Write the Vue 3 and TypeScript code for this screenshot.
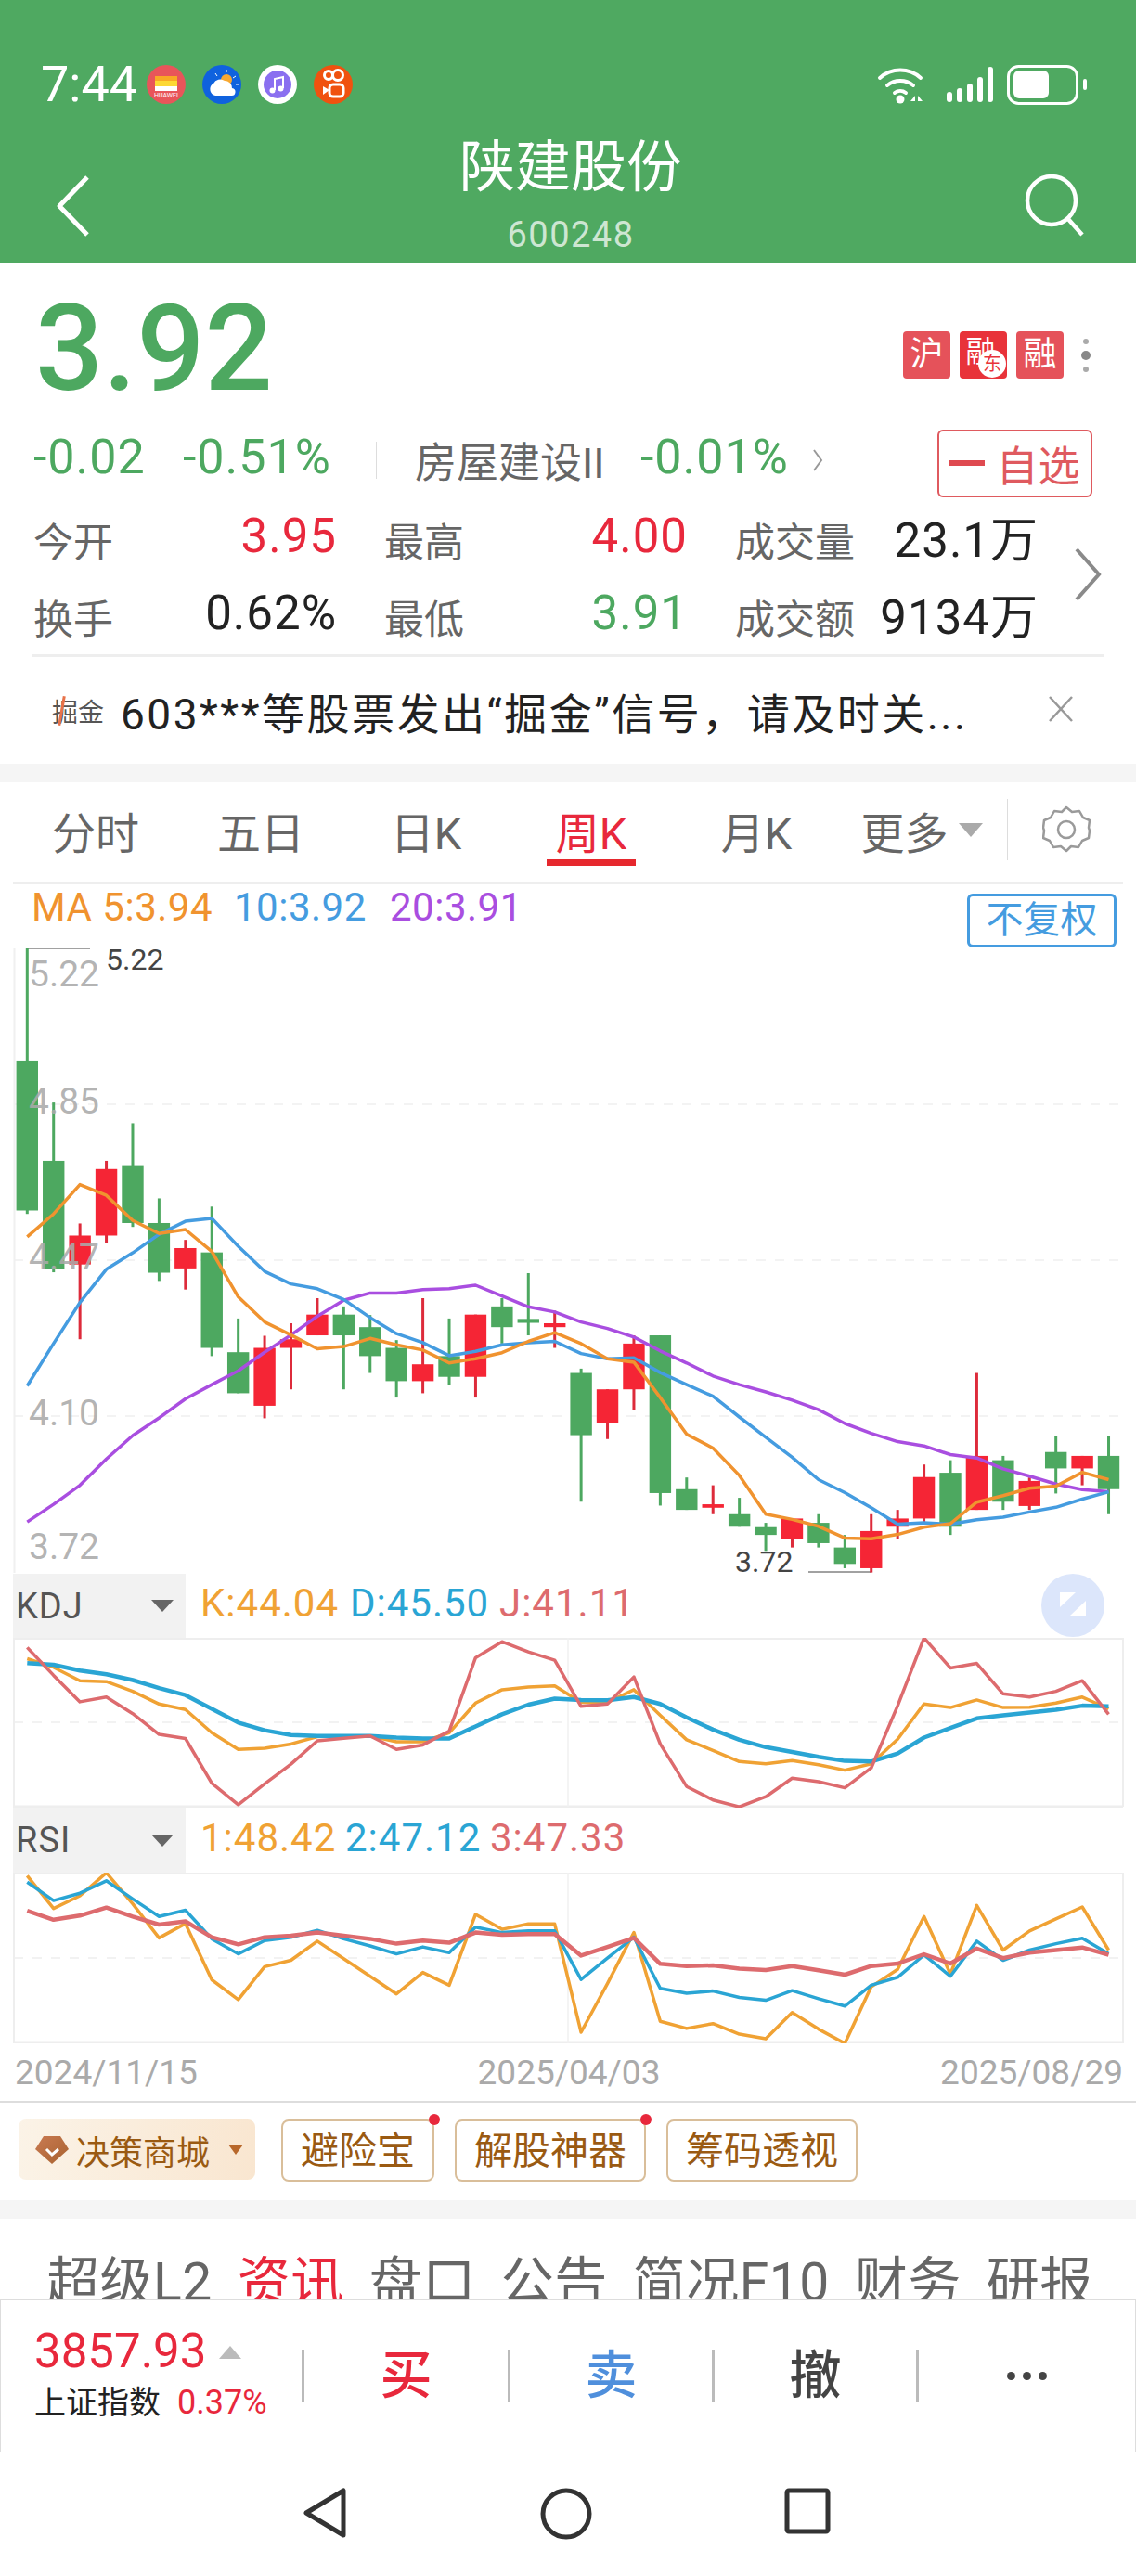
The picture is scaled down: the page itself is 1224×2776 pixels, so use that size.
<template>
  <div class="page">
    <header class="top">
      <div class="status">
        <span class="clock">7:44</span>
        <svg class="notify" width="246" height="42" viewBox="0 0 246 42">
          <!-- huawei -->
          <circle cx="21" cy="21" r="21" fill="#e8555a" />
          <rect x="9" y="12" width="24" height="5" fill="#f9a825" />
          <rect x="9" y="17" width="24" height="6" fill="#fdd835" />
          <rect x="9" y="23" width="24" height="5" fill="#fff" />
          <text x="21" y="35" class="hw">HUAWEI</text>
          <!-- weather -->
          <circle cx="81" cy="21" r="21" fill="#0f62de" />
          <circle cx="86" cy="16" r="6" fill="#f7a832" />
          <path d="M74 9l2 3M86 5v3M96 12l-3 2M99 21h-3" stroke="#fff" stroke-width="1" />
          <path d="M74 33a7 7 0 0 1-2-13 8 8 0 0 1 12-3 8 8 0 0 1 8 8 4 4 0 0 1-1 8z" fill="#fff" />
          <!-- music -->
          <circle cx="141" cy="21" r="21" fill="#fff" />
          <circle cx="141" cy="21" r="15" fill="#8a6ff0" />
          <path d="M138 27V15l9-2v12" fill="none" stroke="#fff" stroke-width="2" />
          <circle cx="135.500" cy="27.500" r="3" fill="#fff" />
          <circle cx="144.500" cy="25.500" r="3" fill="#fff" />
          <!-- kuaishou -->
          <circle cx="201" cy="21" r="21" fill="#f0520f" />
          <circle cx="196" cy="11" r="4.500" fill="none" stroke="#fff" stroke-width="3" />
          <circle cx="206" cy="11" r="5.500" fill="none" stroke="#fff" stroke-width="3" />
          <rect x="197" y="21" width="15" height="13" rx="4" fill="none" stroke="#fff" stroke-width="3" />
          <path d="M197 27l-7-4v9z" fill="#fff" />
        </svg>
        <svg class="sys" width="232" height="46" viewBox="0 0 232 46">
          <!-- wifi -->
          <path d="M3 16a33 33 0 0 1 44 0" fill="none" stroke="#fff" stroke-width="4" stroke-linecap="round" />
          <path d="M11 24a22 22 0 0 1 28 0" fill="none" stroke="#fff" stroke-width="4" stroke-linecap="round" />
          <path d="M19 32a10 10 0 0 1 12 0" fill="none" stroke="#fff" stroke-width="4" stroke-linecap="round" />
          <circle cx="25" cy="39" r="4.500" fill="#fff" />
          <path d="M36 41l5-6v6zM44 35l5 6h-5z" fill="#fff" />
          <!-- signal -->
          <g fill="#fff">
            <rect x="75" y="31" width="6" height="11" rx="3" />
            <rect x="86" y="27" width="6" height="15" rx="3" />
            <rect x="97" y="22" width="6" height="20" rx="3" />
            <rect x="108" y="15" width="6" height="27" rx="3" />
            <rect x="119" y="4" width="6" height="38" rx="3" />
          </g>
          <!-- battery -->
          <rect x="141.500" y="3.500" width="74" height="40" rx="11" fill="none" stroke="#fff" stroke-width="3" />
          <rect x="147" y="8" width="38" height="30" rx="6" fill="#fff" />
          <rect x="222" y="17" width="4" height="12" rx="2" fill="#fff" />
        </svg>
      </div>
      <div class="nav">
        <svg class="back" width="38" height="68" viewBox="0 0 38 68">
          <path d="M34 3L4 34l30 31" fill="none" stroke="#fff" stroke-width="5" stroke-linejoin="round" />
        </svg>
        <div class="title">
          <div class="name">陕建股份</div>
          <div class="code">600248</div>
        </div>
        <svg class="search" width="66" height="68" viewBox="0 0 66 68">
          <circle cx="29" cy="29" r="26" fill="none" stroke="#fff" stroke-width="4.500" />
          <path d="M46 48l16 18" fill="none" stroke="#fff" stroke-width="4.500" />
        </svg>
      </div>
    </header>

    <section class="quote">
      <div class="price-row">
        <span class="price">3.92</span>
        <div class="badges">
          <span class="badge">沪</span>
          <span class="badge badge-dong">
            <span class="rong">融</span>
            <i class="dong">东</i>
          </span>
          <span class="badge">融</span>
          <span class="more-dots"><i></i><i class="mid"></i><i></i></span>
        </div>
      </div>
      <div class="change-row">
        <span class="down chg chg-abs">-0.02</span>
        <span class="down chg chg-pct">-0.51%</span>
        <span class="vline"></span>
        <span class="industry">房屋建设II</span>
        <span class="down chg ind-pct">-0.01%</span>
        <svg width="12" height="26" viewBox="0 0 12 26">
          <path d="M2 2l8 11-8 11" fill="none" stroke="#999" stroke-width="2" />
        </svg>
        <button class="watch"><i></i>自选</button>
      </div>
      <div class="stats-wrap">
        <div class="stats">
          <div v-for="s in stats" :key="s.label" class="stat">
            <span class="stat-label">{{ s.label }}</span>
            <span class="stat-value" :class="s.cls">{{ s.value }}</span>
          </div>
        </div>
        <svg class="stats-arrow" width="32" height="58" viewBox="0 0 32 58">
          <path d="M4 2l24 27L4 56" fill="none" stroke="#8a8a8a" stroke-width="4" />
        </svg>
      </div>
      <div class="notice">
        <span class="notice-tag">掘金</span>
        <span class="notice-text">603***等股票发出“掘金”信号，请及时关...</span>
        <svg class="notice-close" width="30" height="30" viewBox="0 0 30 30">
          <path d="M3 2l24 26M27 2L3 28" fill="none" stroke="#999" stroke-width="2.500" />
        </svg>
      </div>
    </section>

    <div class="gap"></div>

    <section class="kline">
      <div class="periods">
        <span v-for="p in periods" :key="p" class="period" :class="{ on: p === '周K' }">{{ p }}</span>
        <span class="period">更多<i class="caret"></i></span>
        <span class="period-sep"></span>
        <svg class="gear" width="52" height="54" viewBox="0 0 52 54">
          <path d="M26 3l6 5 8-1 4 7 7 3-1 8 1 3-1 8-7 3-4 7-8-1-5 5-6-5-8 1-4-7-7-3 1-8-1-3 1-8 7-3 4-7 8 1z" fill="none" stroke="#9a9a9a" stroke-width="2.500" stroke-linejoin="round" />
          <circle cx="26" cy="27" r="9" fill="none" stroke="#9a9a9a" stroke-width="2.500" />
        </svg>
      </div>
      <div class="ma-row">
        <span class="ma5">MA 5:3.94</span>
        <span class="ma10">10:3.92</span>
        <span class="ma20">20:3.91</span>
        <button class="adjust">不复权</button>
      </div>
      <div class="chart">
        <svg class="plot" width="1224" height="674" viewBox="0 1022 1224 674">
          <path d="M15.500 1022V1695" stroke="#f0f0f0" stroke-width="2" />
          <path v-for="y in [1190, 1358, 1526]" :key="y" :d="`M15 ${y}H1210`" stroke="#f0f0f0" stroke-width="1.500" stroke-dasharray="10 10" />
          <path d="M29 1022H97M871 1694H939" stroke="#444" stroke-width="1" />
          <g v-for="c in candleShapes" :key="c.x">
            <rect :x="c.x - 1.500" :y="c.wickTop" width="3" :height="c.wickH" :fill="c.wick" />
            <rect :x="c.x - 11.700" :y="c.bodyTop" width="23.400" :height="c.bodyH" :fill="c.fill" />
          </g>
          <path :d="ma20Path" class="line ma-purple" />
          <path :d="ma10Path" class="line ma-blue" />
          <path :d="ma5Path" class="line ma-orange" />
        </svg>
        <span v-for="l in axisLabels" :key="l.text" class="axis-label" :style="{ top: l.top + 'px' }">{{ l.text }}</span>
        <span class="extreme high">5.22</span>
        <span class="extreme low">3.72</span>
      </div>

      <div class="ind-head">
        <span class="ind-tab">KDJ<i class="ind-caret"></i></span>
        <span class="k">K:44.04</span>
        <span class="d">D:45.50</span>
        <span class="j">J:41.11</span>
        <svg class="bubble" width="68" height="68" viewBox="0 0 68 68">
          <circle cx="34" cy="34" r="34" fill="#dce6fb" />
          <path d="M20 20h17L20 36zM48 29v16H31z" fill="#fff" />
        </svg>
      </div>
      <svg class="plot" width="1224" height="183" viewBox="0 1765 1224 183">
        <path d="M15 1765V1947M1210 1765V1947M14 1766H1210" stroke="#eee" stroke-width="2" fill="none" />
        <path d="M14 1947H1210" stroke="#eee" stroke-width="3" />
        <path d="M15 1856H1210" stroke="#eee" stroke-width="1.500" stroke-dasharray="10 10" />
        <path d="M612 1765V1947" stroke="#f0f0f0" stroke-width="1.500" />
        <path :d="kPath" class="line ind-orange" />
        <path :d="dPath" class="line ind-blue thick" />
        <path :d="jPath" class="line ind-red" />
      </svg>

      <div class="ind-head rsi">
        <span class="ind-tab">RSI<i class="ind-caret"></i></span>
        <span class="k">1:48.42</span>
        <span class="d">2:47.12</span>
        <span class="j">3:47.33</span>
      </div>
      <svg class="plot" width="1224" height="184" viewBox="0 2018 1224 184">
        <path d="M15 2018V2202M1210 2018V2202M14 2019H1210" stroke="#eee" stroke-width="2" fill="none" />
        <path d="M14 2202H1210" stroke="#eee" stroke-width="3" />
        <path d="M15 2110H1210" stroke="#eee" stroke-width="1.500" stroke-dasharray="10 10" />
        <path d="M612 2018V2202" stroke="#f0f0f0" stroke-width="1.500" />
        <path :d="rsi1Path" class="line ind-orange" />
        <path :d="rsi2Path" class="line ind-blue" />
        <path :d="rsi3Path" class="line ind-red thick" />
      </svg>
      <div class="dates">
        <span>2024/11/15</span>
        <span>2025/04/03</span>
        <span>2025/08/29</span>
      </div>
    </section>

    <div class="tools">
      <button class="shop">
        <svg width="36" height="30" viewBox="0 0 36 30">
          <defs>
            <linearGradient id="gem" x1="0" y1="0" x2="1" y2="1">
              <stop offset="0" stop-color="#c97a52" />
              <stop offset="1" stop-color="#a8622f" />
            </linearGradient>
          </defs>
          <path d="M9 0h18l9 14-18 16L0 14z" fill="url(#gem)" />
          <path d="M12 14l6 6 7-6" fill="none" stroke="#fff" stroke-width="3" />
        </svg>
        <span>决策商城</span>
        <i class="shop-caret"></i>
      </button>
      <button class="tool dot">避险宝</button>
      <button class="tool dot">解股神器</button>
      <button class="tool">筹码透视</button>
    </div>

    <div class="gap gap-two"></div>

    <div class="tabs">
      <span>超级L2</span>
      <span class="on">资讯</span>
      <span>盘口</span>
      <span>公告</span>
      <span>简况F10</span>
      <span>财务</span>
      <span>研报</span>
    </div>

    <div class="trade">
      <div class="index">
        <div class="index-top"><span class="index-num">3857.93</span><i class="index-up"></i></div>
        <div class="index-sub"><span>上证指数</span><span class="index-pct">0.37%</span></div>
      </div>
      <div class="act act-buy">买</div>
      <div class="act act-sell">卖</div>
      <div class="act act-undo">撤</div>
      <div class="act act-more"><i></i><i></i><i></i></div>
    </div>

    <div class="sysnav">
      <svg width="48" height="54" viewBox="0 0 48 54">
        <path d="M44 3v48L4 27z" fill="none" stroke="#333" stroke-width="5" stroke-linejoin="round" />
      </svg>
      <svg width="56" height="56" viewBox="0 0 56 56">
        <circle cx="28" cy="28" r="25" fill="none" stroke="#333" stroke-width="5" />
      </svg>
      <svg width="50" height="50" viewBox="0 0 50 50">
        <rect x="3" y="3" width="44" height="44" rx="2" fill="none" stroke="#333" stroke-width="5" />
      </svg>
    </div>
  </div>
</template>

<script setup lang="ts">
// all chart values are measured in reference zoom px, mapped by the scale fns below
const RED = '#f52535'
const GREEN = '#4da860'

const stats = [
  { label: '今开', value: '3.95', cls: 'up' },
  { label: '最高', value: '4.00', cls: 'up' },
  { label: '成交量', value: '23.1万', cls: '' },
  { label: '换手', value: '0.62%', cls: '' },
  { label: '最低', value: '3.91', cls: 'down' },
  { label: '成交额', value: '9134万', cls: '' }
]

const periods = ['分时', '五日', '日K', '周K', '月K']

const axisLabels = [
  { text: '5.22', top: 6 },
  { text: '4.85', top: 143 },
  { text: '4.47', top: 311 },
  { text: '4.10', top: 479 },
  { text: '3.72', top: 623 }
]

// wickTop, bodyTop, bodyBottom, wickBottom, 1 = rising
const candles: number[][] = [
  [90, 350, 697, 705, 0], [447, 582, 832, 840, 0], [727, 755, 822, 995, 1], [582, 601, 755, 773, 1],
  [495, 592, 726, 735, 0], [669, 726, 841, 860, 0], [765, 784, 831, 880, 1], [688, 794, 1015, 1034, 0],
  [947, 1025, 1120, 1120, 0], [987, 1015, 1149, 1178, 1], [958, 995, 1015, 1111, 1], [900, 938, 986, 986, 1],
  [919, 938, 986, 1111, 0], [939, 967, 1034, 1073, 0], [997, 1015, 1092, 1130, 0], [900, 1053, 1092, 1120, 1],
  [947, 1034, 1082, 1101, 0], [938, 938, 1082, 1130, 1], [900, 919, 967, 1005, 0], [842, 948, 957, 986, 0],
  [929, 958, 967, 1015, 1], [1063, 1073, 1217, 1371, 0], [1111, 1111, 1188, 1226, 1], [986, 1005, 1111, 1159, 1],
  [986, 986, 1351, 1380, 0], [1315, 1342, 1390, 1390, 0], [1333, 1377, 1385, 1400, 1], [1362, 1400, 1429, 1429, 0],
  [1420, 1430, 1448, 1485, 0], [1410, 1410, 1458, 1477, 1], [1400, 1420, 1467, 1477, 0], [1448, 1477, 1515, 1525, 0],
  [1400, 1439, 1525, 1535, 1], [1390, 1410, 1429, 1458, 1], [1285, 1314, 1410, 1420, 1], [1275, 1304, 1429, 1448, 0],
  [1073, 1265, 1390, 1390, 1], [1265, 1275, 1371, 1390, 0], [1315, 1323, 1381, 1390, 1], [1218, 1256, 1294, 1352, 0],
  [1265, 1265, 1294, 1333, 1], [1218, 1265, 1342, 1400, 0]
]

const ma5 = [758, 705, 637, 662, 720, 750, 741, 792, 897, 955, 985, 1017, 1012, 993, 1008, 1020, 1050, 1040, 1026, 1000, 980, 1005, 1040, 1048, 1130, 1215, 1247, 1310, 1400, 1412, 1428, 1455, 1457, 1447, 1430, 1422, 1372, 1357, 1340, 1335, 1303, 1320]
const ma10 = [1103, 1005, 910, 833, 795, 752, 722, 715, 780, 838, 867, 878, 903, 945, 982, 1003, 1033, 1023, 1008, 1003, 1000, 1028, 1040, 1038, 1072, 1100, 1127, 1175, 1222, 1268, 1320, 1350, 1385, 1423, 1420, 1423, 1413, 1407, 1395, 1384, 1365, 1348]
const ma20 = [1418, 1377, 1333, 1272, 1218, 1177, 1133, 1100, 1068, 1025, 985, 942, 905, 888, 888, 880, 878, 870, 895, 920, 932, 955, 970, 990, 1022, 1050, 1080, 1100, 1117, 1136, 1158, 1190, 1213, 1232, 1242, 1262, 1270, 1295, 1312, 1330, 1343, 1348]

const kdjK = [283, 310, 352, 355, 385, 425, 442, 515, 567, 563, 550, 527, 525, 525, 543, 543, 515, 422, 380, 372, 368, 420, 420, 380, 460, 537, 570, 605, 612, 602, 615, 632, 612, 535, 425, 436, 412, 436, 435, 422, 403, 440]
const kdjD = [297, 302, 320, 332, 350, 375, 397, 440, 483, 507, 522, 525, 525, 525, 530, 533, 533, 495, 457, 427, 408, 412, 413, 403, 425, 467, 505, 537, 560, 575, 590, 603, 605, 580, 530, 500, 470, 460, 452, 443, 430, 432]
const kdjJ = [248, 335, 418, 403, 455, 520, 533, 673, 740, 675, 613, 540, 532, 525, 567, 553, 510, 280, 230, 262, 288, 432, 425, 340, 550, 683, 725, 747, 715, 657, 668, 687, 625, 430, 218, 312, 298, 393, 403, 385, 352, 457]

const rsi1 = [962, 1065, 1025, 953, 1050, 1157, 1112, 1288, 1350, 1247, 1227, 1167, 1222, 1277, 1332, 1265, 1305, 1083, 1130, 1113, 1113, 1452, 1300, 1140, 1418, 1440, 1425, 1458, 1472, 1390, 1442, 1487, 1310, 1255, 1090, 1270, 1055, 1195, 1135, 1097, 1060, 1195]
const rsi2 = [982, 1040, 1017, 978, 1035, 1090, 1070, 1160, 1207, 1165, 1155, 1133, 1160, 1182, 1207, 1185, 1203, 1123, 1140, 1135, 1135, 1287, 1220, 1155, 1315, 1330, 1323, 1343, 1352, 1322, 1347, 1370, 1305, 1280, 1210, 1277, 1167, 1227, 1195, 1175, 1158, 1207]
const rsi3 = [1072, 1100, 1087, 1062, 1090, 1115, 1105, 1155, 1177, 1155, 1150, 1140, 1150, 1160, 1175, 1165, 1172, 1140, 1147, 1145, 1145, 1212, 1185, 1157, 1238, 1245, 1243, 1253, 1257, 1245, 1258, 1272, 1245, 1237, 1208, 1237, 1190, 1220, 1203, 1195, 1187, 1210]

const xAt = (i: number) => 29.3 + i * 28.42
const priceY = (v: number) => 980 + v / 2.148
const lowerY = (v: number) => 1690 + v / 2.904

const toPath = (vals: number[], scale: (v: number) => number) =>
  vals.map((v, i) => `${i ? 'L' : 'M'}${xAt(i).toFixed(1)} ${scale(v).toFixed(1)}`).join(' ')

const candleShapes = candles.map(([wt, bt, bb, wb, rising], i) => ({
  x: xAt(i),
  wickTop: priceY(wt),
  wickH: priceY(wb) - priceY(wt),
  bodyTop: priceY(bt),
  bodyH: priceY(bb) - priceY(bt),
  fill: rising ? RED : GREEN,
  wick: rising ? '#dd2b3b' : GREEN
}))

const ma5Path = toPath(ma5, priceY)
const ma10Path = toPath(ma10, priceY)
const ma20Path = toPath(ma20, priceY)
const kPath = toPath(kdjK, lowerY)
const dPath = toPath(kdjD, lowerY)
const jPath = toPath(kdjJ, lowerY)
const rsi1Path = toPath(rsi1, lowerY)
const rsi2Path = toPath(rsi2, lowerY)
const rsi3Path = toPath(rsi3, lowerY)
</script>

<style scoped>
.page {
  width: 1224px;
  height: 2776px;
  overflow: hidden;
  background: #fff;
  font-family: Roboto, "Noto Sans CJK SC", sans-serif;
  color: #222;
}

button {
  font-family: inherit;
  background: none;
  padding: 0;
}

i {
  font-style: normal;
  display: block;
}

/* header */
.top {
  height: 283px;
  background: #4fa961;
  color: #fff;
}

.status {
  height: 112px;
  padding: 70px 0 0 44px;
  box-sizing: border-box;
  display: flex;
  align-items: center;
}

.clock {
  font-size: 54px;
  line-height: 42px;
  width: 114px;
}

.notify {
  display: block;
}

.hw {
  font-size: 7px;
  fill: #fff;
  text-anchor: middle;
}

.sys {
  margin-left: auto;
  margin-right: 47px;
  display: block;
}

.nav {
  height: 171px;
  display: grid;
  grid-template-columns: 1fr auto 1fr;
  padding: 0 54px 0 60px;
}

.back {
  margin-top: 76px;
}

.title {
  text-align: center;
}

.name {
  margin-top: 39px;
  font-size: 60px;
  line-height: 60px;
}

.code {
  margin-top: 24px;
  font-size: 38px;
  line-height: 37px;
  letter-spacing: 1.500px;
  color: rgba(255, 255, 255, 0.72);
}

.search {
  margin-top: 75px;
  justify-self: end;
}

/* quote */
.price-row {
  height: 176px;
  padding: 28px 0 0 38px;
  box-sizing: border-box;
  display: flex;
  position: relative;
}

.price {
  font-size: 129px;
  line-height: 130px;
  font-weight: 500;
  color: #4da860;
}

.badges {
  margin-left: auto;
  margin-right: 49px;
  margin-top: 46px;
  display: flex;
  gap: 10px;
  height: 51px;
}

.badge {
  width: 51px;
  height: 51px;
  border-radius: 4px;
  background: #e5525a;
  color: #fff;
  font-size: 36px;
  line-height: 50px;
  text-align: center;
  position: relative;
}

.badge-dong {
  background: #e8333a;
}

.rong {
  display: block;
  margin-left: -6px;
  margin-top: -3px;
  font-size: 32px;
}

.dong {
  position: absolute;
  right: 1px;
  bottom: 1px;
  width: 30px;
  height: 30px;
  line-height: 30px;
  border-radius: 50%;
  background: #fff;
  color: #e8333a;
  font-size: 20px;
}

.more-dots {
  display: flex;
  flex-direction: column;
  align-items: center;
  justify-content: center;
  gap: 7px;
  margin-left: 9px;
  width: 10px;
}

.more-dots i {
  width: 6px;
  height: 6px;
  border-radius: 50%;
  background: #aaa;
}

.more-dots .mid {
  width: 10px;
  height: 10px;
  background: #888;
}

.change-row {
  height: 80px;
  display: flex;
  align-items: center;
  padding-left: 36px;
  position: relative;
}

.chg {
  font-size: 52px;
  letter-spacing: 1px;
  margin-bottom: 14px;
}

.down {
  color: #4da860;
}

.up {
  color: #e8283c;
}

.chg-abs {
  width: 161px;
}

.chg-pct {
  width: 208px;
}

.vline {
  width: 1px;
  height: 40px;
  background: #ddd;
  margin: 0 41px 6px 0;
}

.industry {
  font-size: 45px;
  color: #666;
  width: 243px;
  margin-bottom: 8px;
  white-space: nowrap;
}

.ind-pct {
  width: 185px;
}

.change-row svg {
  margin-bottom: 6px;
}

.watch {
  margin-left: auto;
  margin-right: 47px;
  width: 167px;
  height: 73px;
  box-sizing: border-box;
  border: 2px solid #df5a5f;
  border-radius: 6px;
  color: #df5a5f;
  font-size: 45px;
  display: flex;
  align-items: center;
  justify-content: center;
  gap: 12px;
}

.watch i {
  width: 38px;
  height: 6px;
  background: #df4a50;
}

.stats-wrap {
  display: flex;
  height: 166px;
  align-items: center;
}

.stats {
  padding-left: 36px;
  display: grid;
  grid-template-columns: repeat(3, 327px);
  grid-auto-rows: 83px;
  column-gap: 51px;
}

.stat {
  display: flex;
  justify-content: space-between;
  align-items: center;
}

.stat-label {
  font-size: 43px;
  color: #666;
}

.stat-value {
  font-size: 51px;
  letter-spacing: 1px;
  margin-bottom: 6px;
}

.stats-arrow {
  margin-left: 37px;
  margin-bottom: 6px;
}

.notice {
  margin: 0 34px;
  height: 118px;
  box-sizing: border-box;
  border-top: 3px solid #eee;
  display: flex;
  align-items: center;
  padding-left: 22px;
}

.notice-tag {
  font-size: 28px;
  color: #555;
  width: 74px;
  position: relative;
}

.notice-tag::after {
  content: "";
  position: absolute;
  left: 9px;
  top: 4px;
  width: 3px;
  height: 32px;
  background: #e8734a;
  transform: rotate(10deg);
}

.notice-text {
  font-size: 46px;
  letter-spacing: 2.500px;
  color: #222;
  white-space: nowrap;
  width: 998px;
}

.notice-close {
  margin-bottom: 4px;
}

.gap {
  height: 20px;
  background: #f5f5f5;
}

/* kline */
.periods {
  height: 108px;
  padding: 0 0 6px 14px;
  box-sizing: border-box;
  display: grid;
  grid-template-columns: repeat(6, 178px) 41px 52px;
  align-items: center;
  position: relative;
}

.period {
  font-size: 47px;
  color: #666;
  text-align: center;
  position: relative;
  display: flex;
  justify-content: center;
  align-items: center;
}

.period.on {
  color: #e8283c;
}

.period.on::after {
  content: "";
  position: absolute;
  left: 41px;
  width: 96px;
  height: 7px;
  top: 66px;
  background: #e6282e;
}

.caret {
  margin-left: 11px;
  width: 0;
  height: 0;
  border: 13px solid transparent;
  border-top: 15px solid #aaa;
  border-bottom: 0;
}

.period-sep {
  width: 1px;
  height: 66px;
  background: #ddd;
  margin-left: 3px;
}

.ma-row {
  height: 71px;
  margin: 0 14px;
  border-top: 2px solid #eee;
  box-sizing: border-box;
  display: flex;
  font-size: 42px;
  letter-spacing: 0.500px;
  padding: 3px 0 0 20px;
  position: relative;
  line-height: 44px;
}

.ma5 {
  color: #f0932f;
  width: 218px;
}

.ma10 {
  color: #459ce0;
  width: 168px;
}

.ma20 {
  color: #a94ee0;
}

.adjust {
  position: absolute;
  right: 7px;
  top: 10px;
  width: 161px;
  height: 58px;
  box-sizing: border-box;
  border: 3px solid #459ce0;
  border-radius: 6px;
  color: #459ce0;
  font-size: 40px;
  line-height: 50px;
}

.chart {
  position: relative;
  height: 674px;
}

.plot {
  display: block;
}

.line {
  fill: none;
  stroke-width: 3.5;
  stroke-linejoin: round;
}

.ma-orange {
  stroke: #f0932f;
}

.ma-blue {
  stroke: #459ce0;
}

.ma-purple {
  stroke: #a94ee0;
}

.ind-orange {
  stroke: #f0a234;
}

.ind-blue {
  stroke: #2aa5d4;
}

.ind-red {
  stroke: #dd6b6e;
}

.thick {
  stroke-width: 4.5;
}

.axis-label {
  position: absolute;
  left: 31px;
  font-size: 39px;
  line-height: 44px;
  color: rgba(170, 170, 170, 0.9);
}

.extreme {
  position: absolute;
  font-size: 32px;
  line-height: 36px;
  color: #444;
}

.high {
  left: 114px;
  top: -6px;
}

.low {
  left: 792px;
  top: 643px;
}

.ind-head {
  height: 69px;
  display: flex;
  align-items: center;
  font-size: 42px;
  letter-spacing: 1px;
  position: relative;
}

.rsi {
  height: 70px;
}

.ind-head > span:not(.ind-tab) {
  margin-bottom: 6px;
}

.ind-tab {
  align-self: stretch;
  margin-left: 14px;
  width: 186px;
  padding: 0 13px 0 3px;
  box-sizing: border-box;
  background: #f2f2f2;
  color: #555;
  font-size: 38px;
  display: flex;
  align-items: center;
  justify-content: space-between;
  margin-right: 16px;
}

.ind-caret {
  width: 0;
  height: 0;
  border: 12px solid transparent;
  border-top: 13px solid #666;
  border-bottom: 0;
}

.k {
  color: #f0a234;
  width: 161px;
}

.d {
  color: #2aa5d4;
  width: 161px;
}

.j {
  color: #dd6b6e;
}

.rsi .k,
.rsi .d {
  width: 156px;
}

.bubble {
  position: absolute;
  right: 34px;
  top: 0;
}

.dates {
  height: 62px;
  padding: 0 14px 0 16px;
  display: flex;
  justify-content: space-between;
  align-items: center;
  font-size: 37px;
  color: #aaa;
  box-sizing: border-box;
}

/* action chips */
.tools {
  height: 107px;
  border-top: 2px solid #ddd;
  box-sizing: border-box;
  padding: 18px 0 0 20px;
  display: flex;
  align-items: flex-start;
  gap: 22px;
}

.shop {
  width: 255px;
  height: 65px;
  border: 0;
  border-radius: 8px;
  background: linear-gradient(100deg, #fbf3e7, #f9e6d0);
  color: #9a5a12;
  font-size: 36px;
  display: flex;
  align-items: center;
  padding-left: 18px;
  box-sizing: border-box;
  margin-right: 6px;
}

.shop span {
  margin-left: 8px;
}

.shop-caret {
  margin-left: 20px;
  width: 0;
  height: 0;
  border: 8px solid transparent;
  border-top: 11px solid #b8682b;
  border-bottom: 0;
}

.tool {
  height: 67px;
  padding: 0 19px;
  border: 2px solid #d9be9a;
  border-radius: 8px;
  background: #fff;
  color: #9a5a12;
  font-size: 41px;
  line-height: 60px;
  position: relative;
}

.dot::after {
  content: "";
  position: absolute;
  right: -8px;
  top: -8px;
  width: 12px;
  height: 12px;
  border-radius: 50%;
  background: #e8283c;
}

.gap-two {
  height: 20px;
}

.tabs {
  height: 87px;
  overflow: hidden;
  padding: 39px 0 0 50px;
  box-sizing: border-box;
  display: flex;
  gap: 27px;
  font-size: 57px;
  letter-spacing: 0.500px;
  line-height: 60px;
  color: #666;
  white-space: nowrap;
}

.tabs .on {
  color: #e8283c;
}

.trade {
  height: 164px;
  box-sizing: border-box;
  border: 1px solid #ddd;
  border-bottom: 0;
  display: flex;
  align-items: center;
  background: #fff;
}

.index {
  width: 324px;
  padding: 0 0 6px 36px;
  box-sizing: border-box;
}

.index-top {
  display: flex;
  align-items: center;
  gap: 14px;
}

.index-num {
  font-size: 51px;
  line-height: 58px;
  color: #e8283c;
}

.index-up {
  width: 0;
  height: 0;
  border: 12px solid transparent;
  border-bottom: 14px solid #bbb;
  border-top: 0;
  margin-top: 2px;
}

.index-sub {
  display: flex;
  align-items: center;
  font-size: 34px;
  line-height: 42px;
  margin-top: 5px;
}

.index-pct {
  margin-left: 18px;
  font-size: 36px;
  color: #e8283c;
}

.act {
  height: 57px;
  border-left: 3px solid #bbb;
  box-sizing: border-box;
  width: 220px;
  font-size: 56px;
  line-height: 57px;
  font-weight: 500;
  text-align: center;
}

.act-buy {
  color: #e8283c;
  width: 222px;
}

.act-sell {
  color: #4f8fdc;
}

.act-undo {
  color: #444;
}

.act-more {
  flex: 1;
  display: flex;
  align-items: center;
  justify-content: center;
  gap: 8px;
}

.act-more i {
  width: 9px;
  height: 9px;
  border-radius: 50%;
  background: #444;
}

.sysnav {
  height: 134px;
  padding: 39px 329px 0 326px;
  box-sizing: border-box;
  display: flex;
  justify-content: space-between;
  align-items: flex-start;
  background: #fff;
}
</style>
